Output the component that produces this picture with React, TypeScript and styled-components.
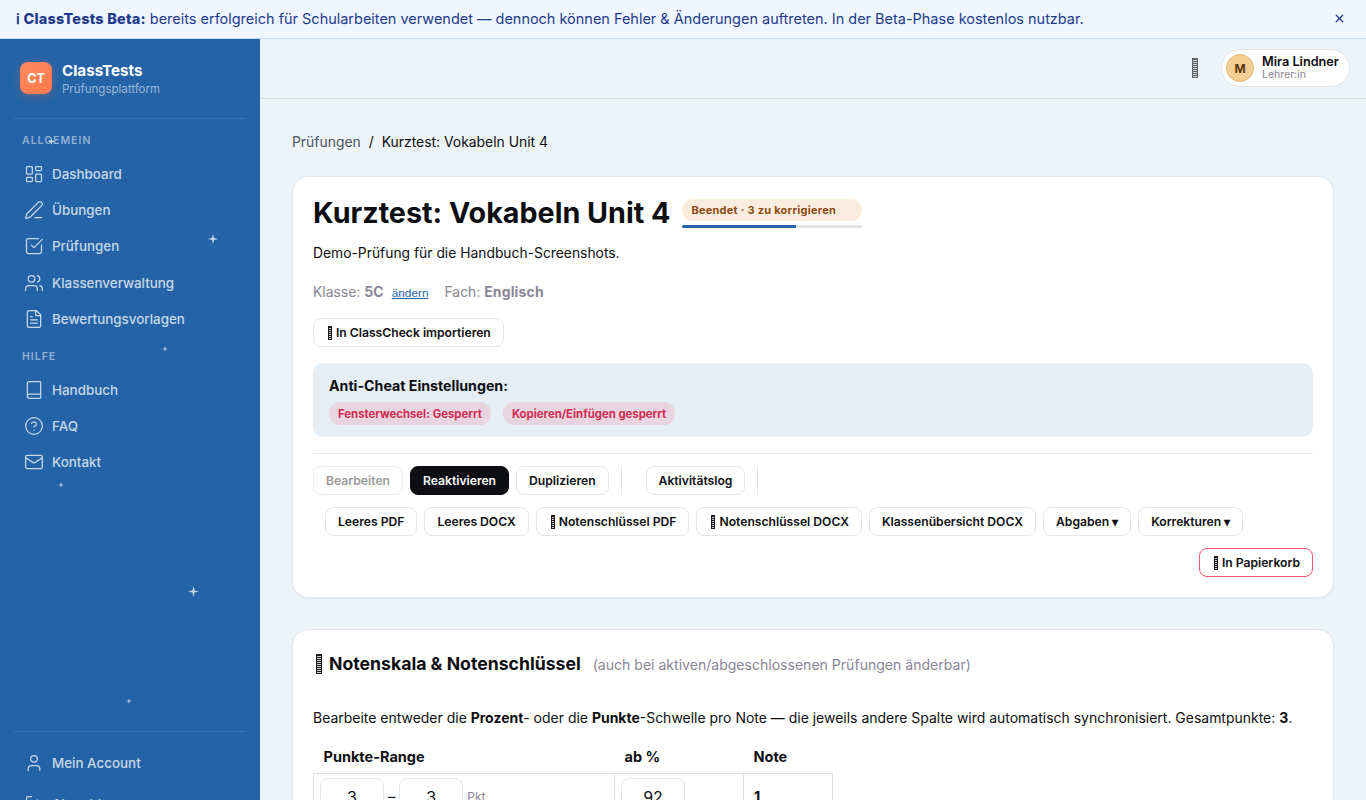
import React from "react";
import styled, { createGlobalStyle } from "styled-components";
import {
  Book,
  CircleHelp,
  FileText,
  LayoutDashboard,
  LogOut,
  Mail,
  PenLine,
  SquareCheckBig,
  User,
  Users,
  X,
} from "lucide-react";

const GlobalStyle = createGlobalStyle`
  html, body {
    margin: 0;
    height: 100%;
    overflow: hidden;
  }
  body {
    font-family: Inter, "Liberation Sans", sans-serif;
    background: #edf4f8;
    color: #0d0e12;
  }
  * { box-sizing: border-box; }
`;

const Shell = styled.div`
  height: 100vh;
  display: flex;
  flex-direction: column;
  overflow: hidden;
`;

const Banner = styled.div`
  height: 39px;
  flex: none;
  display: flex;
  align-items: center;
  justify-content: space-between;
  padding: 0 20px 1px 16px;
  background: #eff6ff;
  border-bottom: 1px solid #bfdbfe;
  color: #1e3a8a;
  font-size: 14.48px;
  strong {
    font-weight: 800;
    letter-spacing: 0.2px;
  }
`;

const Body = styled.div`
  flex: 1;
  min-height: 0;
  display: flex;
`;

const Sidebar = styled.aside`
  position: relative;
  width: 260px;
  flex: none;
  display: flex;
  flex-direction: column;
  background: #2463a7;
  padding: 23px 14px 0;
  overflow: hidden;
`;

const Brand = styled.div`
  display: flex;
  gap: 10px;
  padding: 0 6px 21px;
  border-bottom: 1px solid rgba(255, 255, 255, 0.1);
`;

const LogoBox = styled.div`
  width: 32px;
  height: 32px;
  border-radius: 8px;
  display: flex;
  align-items: center;
  justify-content: center;
  background: linear-gradient(135deg, #ff8a5c, #ff7a4d);
  box-shadow: 0 2px 8px rgba(255, 122, 77, 0.3);
  color: #fff;
  font-size: 12.5px;
  font-weight: 700;
`;

const BrandText = styled.div`
  margin-top: -1px;
  display: flex;
  flex-direction: column;
  gap: 2px;
`;

const BrandName = styled.div`
  color: #fff;
  font-size: 15.2px;
  font-weight: 700;
  line-height: 19px;
`;

const BrandSub = styled.div`
  color: rgba(255, 255, 255, 0.55);
  font-size: 11.5px;
  line-height: 15px;
`;

const SectionLabel = styled.div<{ $top: number }>`
  margin-top: ${(p) => p.$top}px;
  padding: 0 8px;
  height: 14px;
  line-height: 14px;
  color: rgba(255, 255, 255, 0.5);
  font-size: 10.5px;
  font-weight: 600;
  letter-spacing: 1px;
`;

const Nav = styled.nav`
  margin-top: 8px;
  display: flex;
  flex-direction: column;
`;

const NavItem = styled.a`
  height: 36.2px;
  flex: none;
  display: flex;
  align-items: center;
  gap: 8px;
  padding: 0 10px;
  color: rgba(255, 255, 255, 0.75);
  font-size: 13.4px;
  font-weight: 500;
  svg { flex: none; }
`;

const SideFooter = styled.div`
  margin-top: auto;
  margin-bottom: -22px;
  padding-top: 13px;
  display: flex;
  flex-direction: column;
  gap: 5px;
  border-top: 1px solid rgba(255, 255, 255, 0.1);
`;

const Spark = styled.svg<{ $x: number; $y: number; $s: number }>`
  position: absolute;
  left: ${(p) => p.$x - p.$s / 2}px;
  top: ${(p) => p.$y - 39 - p.$s / 2}px;
  width: ${(p) => p.$s}px;
  height: ${(p) => p.$s}px;
  fill: rgba(255, 255, 255, 0.75);
`;

const Main = styled.main`
  flex: 1;
  min-width: 0;
  display: flex;
  flex-direction: column;
`;

const Topbar = styled.header`
  height: 60px;
  flex: none;
  display: flex;
  align-items: center;
  justify-content: flex-end;
  gap: 23px;
  padding: 0 16px 1px;
  border-bottom: 1px solid #d5dfe3;
`;

// missing-emoji box, the reference font has no glyph for these
const Tofu = styled.span<{ $w: number; $h: number; $tone?: string }>`
  display: inline-block;
  flex: none;
  width: ${(p) => p.$w}px;
  height: ${(p) => p.$h}px;
  border: 1px solid ${(p) => p.$tone || "#1c1c1f"};
  background: repeating-linear-gradient(
    to bottom,
    ${(p) => p.$tone || "#1c1c1f"} 0 1px,
    #cfcfd2 1px 2px
  );
`;

const BtnTofu = styled(Tofu)`
  margin: 0 0 0 2px;
`;

const UserChip = styled.div`
  height: 38px;
  width: 129px;
  display: flex;
  align-items: center;
  gap: 8px;
  padding: 0 4px;
  background: #fff;
  border: 1px solid #e3e6ea;
  border-radius: 19px;
`;

const Avatar = styled.div`
  width: 28px;
  height: 28px;
  border-radius: 50%;
  display: flex;
  align-items: center;
  justify-content: center;
  background: #f6cf96;
  border: 1px solid #e7b775;
  color: #5b3a0d;
  font-size: 12px;
  font-weight: 700;
`;

const UserMeta = styled.div`
  margin-top: -1px;
`;

const UserName = styled.div`
  font-size: 12.7px;
  font-weight: 600;
  line-height: 14px;
  white-space: nowrap;
`;

const UserRole = styled.div`
  font-size: 10.5px;
  line-height: 12px;
  color: #8a8598;
`;

const Content = styled.div`
  padding: 32px 32px 0;
  display: flex;
  flex-direction: column;
`;

const Crumbs = styled.div`
  display: flex;
  gap: 8px;
  height: 22px;
  align-items: center;
  font-size: 13.9px;
  span:first-child { color: #4b5563; }
`;

const Card = styled.section`
  margin-top: 23px;
  padding: 20px;
  background: #fff;
  border: 1px solid #e3e6ea;
  border-radius: 16px;
  box-shadow: 0 1px 2px rgba(0, 0, 0, 0.05);
  &:nth-of-type(2) { margin-top: 31px; }
`;

const TitleRow = styled.div`
  display: flex;
  align-items: center;
  gap: 12px;
`;

const Title = styled.h1`
  margin: 0;
  font-size: 28.7px;
  line-height: 32px;
  font-weight: 700;
`;

const StatusWrap = styled.div`
  width: 180px;
  display: flex;
  flex-direction: column;
  gap: 4px;
  margin-top: 1px;
`;

const StatusPill = styled.div`
  height: 22px;
  padding: 0 9px;
  display: flex;
  align-items: center;
  background: #fbeddd;
  border-radius: 11px;
  color: #8a4b12;
  font-size: 11px;
  font-weight: 700;
  letter-spacing: 0.25px;
  white-space: nowrap;
`;

const Track = styled.div`
  height: 3px;
  background: #e2e2e2;
  border-radius: 2px;
  overflow: hidden;
`;

const TrackFill = styled.div`
  height: 100%;
  background: #2463a7;
`;

const Lead = styled.p`
  margin: 14px 0 0;
  font-size: 13.85px;
  line-height: 20px;
`;

const Meta = styled.div`
  margin-top: 21px;
  display: flex;
  align-items: baseline;
  gap: 16px;
  height: 20px;
  font-size: 13.9px;
  color: #8a8598;
  b {
    font-weight: 700;
    letter-spacing: 0.2px;
  }
`;

const MetaGroup = styled.span`
  display: inline-flex;
  align-items: baseline;
  gap: 8px;
`;

const ChangeLink = styled.a`
  color: #2463a7;
  font-family: "Liberation Sans", sans-serif;
  font-size: 11.8px;
  text-decoration: underline;
`;

const Btn = styled.button<{ $variant?: "dark" | "muted" | "danger" }>`
  height: 29px;
  padding: 0 12px;
  flex: none;
  display: inline-flex;
  align-items: center;
  gap: 4px;
  font-family: inherit;
  font-size: 12.15px;
  font-weight: 600;
  white-space: nowrap;
  border-radius: 8px;
  background: ${(p) => (p.$variant === "dark" ? "#0d0e12" : "#fff")};
  color: ${(p) =>
    p.$variant === "dark" ? "#fff" : p.$variant === "muted" ? "#9a9a9a" : "#0d0e12"};
  border: 1px solid
    ${(p) =>
      p.$variant === "dark"
        ? "#0d0e12"
        : p.$variant === "danger"
          ? "#f9506e"
          : p.$variant === "muted"
            ? "#eeeeee"
            : "#e3e6ea"};
`;

const ImportRow = styled.div`
  margin-top: 14px;
`;

const AntiCheat = styled.div`
  margin-top: 16px;
  height: 74px;
  padding: 13px 16px;
  background: #e5edf5;
  border-radius: 10px;
`;

const AntiTitle = styled.div`
  font-size: 14.2px;
  line-height: 20px;
  font-weight: 700;
`;

const Tags = styled.div`
  margin-top: 6px;
  display: flex;
  gap: 12px;
`;

const Tag = styled.span`
  height: 23px;
  padding: 0 9px;
  display: inline-flex;
  align-items: center;
  background: #e9d5df;
  border-radius: 12px;
  color: #d02c55;
  font-size: 11.35px;
  font-weight: 700;
`;

const Divider = styled.hr`
  margin: 16px 0 12px;
  border: 0;
  border-top: 1px solid #e3e6ea;
`;

const ActionRow = styled.div`
  display: flex;
  gap: 7px;
`;

const VRule = styled.span`
  width: 1px;
  height: 29px;
  background: #e3e6ea;
  margin: 0 5px;
  &:first-of-type { margin-right: 17px; }
`;

const ExportRow = styled.div`
  margin-top: 12px;
  padding-left: 12px;
  display: flex;
  gap: 7px;
`;

const TrashRow = styled.div`
  margin-top: 12px;
  display: flex;
  justify-content: flex-end;
`;

const SectionHead = styled.div`
  display: flex;
  align-items: center;
  gap: 12px;
  height: 28px;
`;

const SectionTitle = styled.h2`
  margin: 0;
  display: flex;
  align-items: center;
  gap: 7px;
  padding-left: 3px;
  font-size: 17.65px;
  line-height: 28px;
  font-weight: 700;
`;

const SectionHint = styled.span`
  font-size: 14.05px;
  color: #8a8598;
`;

const Explain = styled.p`
  margin: 30px 0 0;
  font-size: 13.97px;
  line-height: 20px;
  b { font-weight: 700; }
`;

const ScaleTable = styled.table`
  margin-top: 11px;
  width: 520px;
  border-collapse: collapse;
  font-size: 14.5px;
  th {
    text-align: left;
    height: 34px;
    padding: 2px 10px 0;
    font-weight: 700;
  }
  td {
    border: 1px solid #dcdfe3;
    padding: 4px 6px;
    height: 46px;
  }
`;

const NumBox = styled.div`
  width: 64px;
  height: 38px;
  display: inline-flex;
  align-items: center;
  justify-content: center;
  border: 1px solid #e3e6ea;
  border-radius: 8px;
  font-size: 16px;
`;

const RangeCell = styled.div`
  display: flex;
  align-items: center;
  gap: 4px;
`;

const Unit = styled.span`
  font-size: 12px;
  color: #8a8598;
`;

const GradeCell = styled.span`
  font-weight: 700;
  padding-left: 4px;
`;

const mainNav = [
  { icon: LayoutDashboard, label: "Dashboard" },
  { icon: PenLine, label: "Übungen" },
  { icon: SquareCheckBig, label: "Prüfungen" },
  { icon: Users, label: "Klassenverwaltung" },
  { icon: FileText, label: "Bewertungsvorlagen" },
];

const helpNav = [
  { icon: Book, label: "Handbuch" },
  { icon: CircleHelp, label: "FAQ" },
  { icon: Mail, label: "Kontakt" },
];

const sparks = [
  { x: 51, y: 141, s: 7 },
  { x: 213, y: 239, s: 10 },
  { x: 165, y: 349, s: 6 },
  { x: 61, y: 485, s: 6 },
  { x: 193, y: 591, s: 11 },
  { x: 129, y: 701, s: 6 },
];

const NavLink = ({ icon: Icon, label }: { icon: typeof Book; label: string }) => (
  <NavItem>
    <Icon size={20} strokeWidth={1.5} />
    {label}
  </NavItem>
);

const App = () => {
  return (
    <Shell>
      <GlobalStyle />
      <Banner>
        <span>
          <strong>ℹ ClassTests Beta:</strong> bereits erfolgreich für Schularbeiten verwendet — dennoch
          können Fehler &amp; Änderungen auftreten. In der Beta-Phase kostenlos nutzbar.
        </span>
        <X size={13} strokeWidth={2.2} />
      </Banner>
      <Body>
        <Sidebar>
          {sparks.map((s) => (
            <Spark key={s.x} $x={s.x} $y={s.y} $s={s.s} viewBox="0 0 10 10">
              <path d="M5 0 L6 4 L10 5 L6 6 L5 10 L4 6 L0 5 L4 4 Z" />
            </Spark>
          ))}
          <Brand>
            <LogoBox>CT</LogoBox>
            <BrandText>
              <BrandName>ClassTests</BrandName>
              <BrandSub>Prüfungsplattform</BrandSub>
            </BrandText>
          </Brand>
          <SectionLabel $top={15}>ALLGEMEIN</SectionLabel>
          <Nav>
            {mainNav.map((n) => (
              <NavLink key={n.label} {...n} />
            ))}
          </Nav>
          <SectionLabel $top={13}>HILFE</SectionLabel>
          <Nav>
            {helpNav.map((n) => (
              <NavLink key={n.label} {...n} />
            ))}
          </Nav>
          <SideFooter>
            <NavLink icon={User} label="Mein Account" />
            <NavLink icon={LogOut} label="Abmelden" />
          </SideFooter>
        </Sidebar>
        <Main>
          <Topbar>
            <Tofu $w={6} $h={20} $tone="#5f6368" />
            <UserChip>
              <Avatar>M</Avatar>
              <UserMeta>
                <UserName>Mira Lindner</UserName>
                <UserRole>Lehrer:in</UserRole>
              </UserMeta>
            </UserChip>
          </Topbar>
          <Content>
            <Crumbs>
              <span>Prüfungen</span>
              <span>/</span>
              <span>Kurztest: Vokabeln Unit 4</span>
            </Crumbs>
            <Card>
              <TitleRow>
                <Title>Kurztest: Vokabeln Unit 4</Title>
                <StatusWrap>
                  <StatusPill>Beendet · 3 zu korrigieren</StatusPill>
                  <Track>
                    <TrackFill style={{ width: "63%" }} />
                  </Track>
                </StatusWrap>
              </TitleRow>
              <Lead>Demo-Prüfung für die Handbuch-Screenshots.</Lead>
              <Meta>
                <MetaGroup>
                  <span>
                    Klasse: <b>5C</b>
                  </span>
                  <ChangeLink>ändern</ChangeLink>
                </MetaGroup>
                <span>
                  Fach: <b>Englisch</b>
                </span>
              </Meta>
              <ImportRow>
                <Btn>
                  <BtnTofu $w={4} $h={14} />
                  In ClassCheck importieren
                </Btn>
              </ImportRow>
              <AntiCheat>
                <AntiTitle>Anti-Cheat Einstellungen:</AntiTitle>
                <Tags>
                  <Tag>Fensterwechsel: Gesperrt</Tag>
                  <Tag>Kopieren/Einfügen gesperrt</Tag>
                </Tags>
              </AntiCheat>
              <Divider />
              <ActionRow>
                <Btn $variant="muted">Bearbeiten</Btn>
                <Btn $variant="dark">Reaktivieren</Btn>
                <Btn>Duplizieren</Btn>
                <VRule />
                <Btn>Aktivitätslog</Btn>
                <VRule />
              </ActionRow>
              <ExportRow>
                <Btn>Leeres PDF</Btn>
                <Btn>Leeres DOCX</Btn>
                <Btn>
                  <BtnTofu $w={4} $h={14} />
                  Notenschlüssel PDF
                </Btn>
                <Btn>
                  <BtnTofu $w={4} $h={14} />
                  Notenschlüssel DOCX
                </Btn>
                <Btn>Klassenübersicht DOCX</Btn>
                <Btn>Abgaben ▾</Btn>
                <Btn>Korrekturen ▾</Btn>
              </ExportRow>
              <TrashRow>
                <Btn $variant="danger">
                  <BtnTofu $w={4} $h={14} />
                  In Papierkorb
                </Btn>
              </TrashRow>
            </Card>
            <Card>
              <SectionHead>
                <SectionTitle>
                  <Tofu $w={6} $h={20} />
                  Notenskala &amp; Notenschlüssel
                </SectionTitle>
                <SectionHint>(auch bei aktiven/abgeschlossenen Prüfungen änderbar)</SectionHint>
              </SectionHead>
              <Explain>
                Bearbeite entweder die <b>Prozent</b>- oder die <b>Punkte</b>-Schwelle pro Note — die
                jeweils andere Spalte wird automatisch synchronisiert. Gesamtpunkte: <b>3</b>.
              </Explain>
              <ScaleTable>
                <thead>
                  <tr>
                    <th style={{ width: 301 }}>Punkte-Range</th>
                    <th style={{ width: 129 }}>ab %</th>
                    <th>Note</th>
                  </tr>
                </thead>
                <tbody>
                  <tr>
                    <td>
                      <RangeCell>
                        <NumBox>3</NumBox>–<NumBox>3</NumBox>
                        <Unit>Pkt</Unit>
                      </RangeCell>
                    </td>
                    <td>
                      <NumBox>92</NumBox>
                    </td>
                    <td>
                      <GradeCell>1</GradeCell>
                    </td>
                  </tr>
                </tbody>
              </ScaleTable>
            </Card>
          </Content>
        </Main>
      </Body>
    </Shell>
  );
};

export default App;
